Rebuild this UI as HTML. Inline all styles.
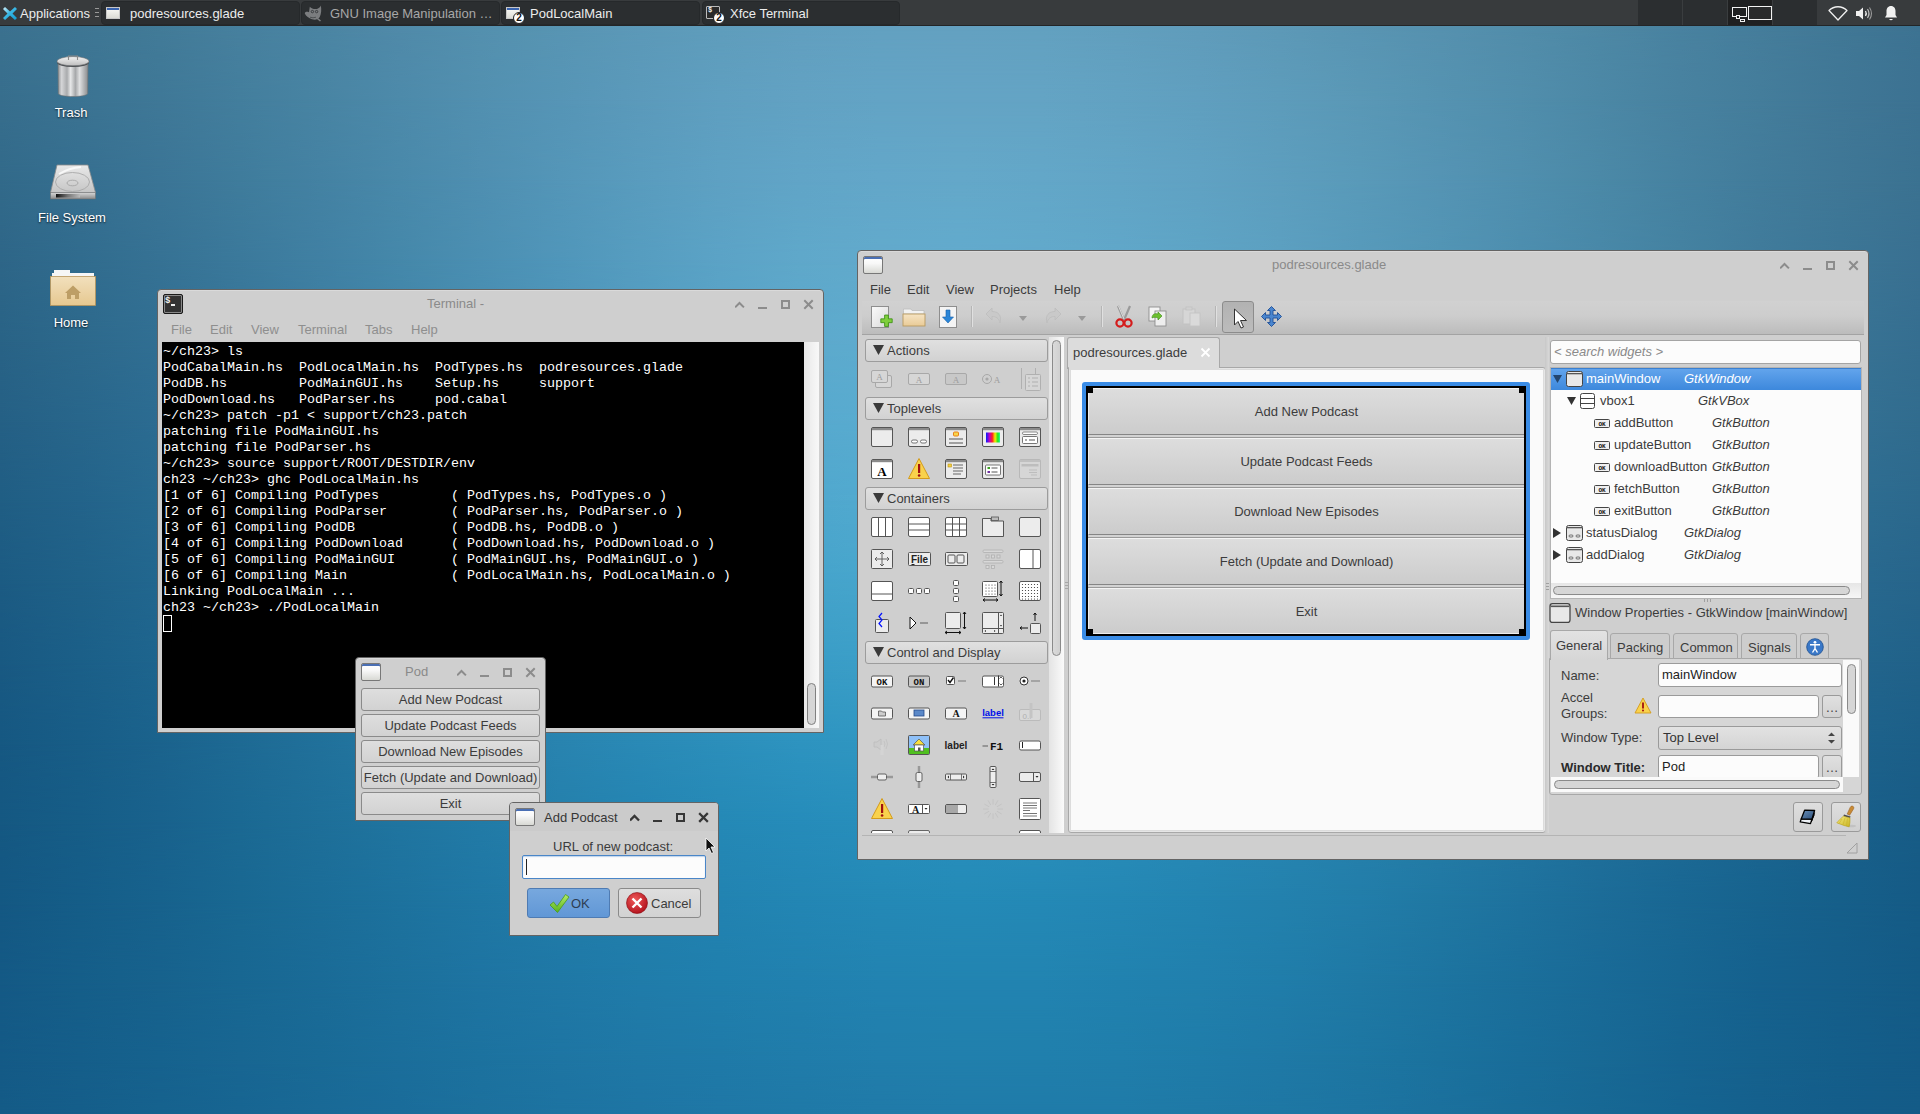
<!DOCTYPE html>
<html><head><meta charset="utf-8">
<style>
*{box-sizing:border-box;margin:0;padding:0}
html,body{width:1920px;height:1114px;overflow:hidden}
body{position:relative;font-family:"Liberation Sans",sans-serif;font-size:13px;color:#3c3c3c;background:#1b5b89}
#wp1{left:0;top:0;width:1920px;height:1114px;background:linear-gradient(90deg,#3b6f91 0px,#447e9f 250px,#5896b8 600px,#63a5c6 900px,#62a4c5 1050px,#508dae 1450px,#3f7596 1800px,#3a6f92 1920px)}
#wp2{left:0;top:0;width:1920px;height:1114px;background:linear-gradient(90deg,#175a8a 0px,#1c6a9c 300px,#2584b6 650px,#2a90c0 930px,#268ab9 1150px,#1b6a9d 1500px,#14528a 1920px);-webkit-mask-image:linear-gradient(180deg,rgba(0,0,0,0) 0px,rgba(0,0,0,.5) 300px,#000 620px,#000 1114px)}
.abs{position:absolute}
#panel{left:0;top:0;width:1920px;height:26px;background:#383b3d;border-bottom:1px solid #232527}
.task{position:absolute;top:1px;height:24px;background:#2b2e30;border:1px solid #26292b;border-radius:4px;color:#e8e8e8;font-size:13px;line-height:24px;white-space:nowrap;overflow:hidden}
.task span{top:0}
.task span{position:absolute;top:0px}
.dicon{position:absolute;color:#fff;font-size:13px;text-align:center;width:100px;text-shadow:0 1px 2px rgba(0,0,0,.8)}
.win{position:absolute;background:#cfcfcf;border:1px solid #646464;border-radius:4px 4px 0 0;box-shadow:inset 0 1px 0 #dadada}
.ttl{position:absolute;font-size:13px;color:#8a8a8a;white-space:nowrap}
.wb{position:absolute}
.term{font-family:"Liberation Mono",monospace;font-size:13.33px;line-height:16px;color:#fff;white-space:pre}
.btn{position:absolute;border:1px solid #8a8a8a;border-radius:3px;background:linear-gradient(#dedede,#d2d2d2);text-align:center;color:#3c3c3c;white-space:nowrap}
.menu span{position:absolute;top:0;white-space:nowrap}
</style></head><body>

<!--WP-->
<div class="abs" style="left:0;top:0;width:1920px;height:1114px;background:linear-gradient(90deg,#3b718f 0px,#3e7693 80px,#427b98 160px,#47809e 240px,#4b85a3 320px,#508aa9 400px,#5490ae 480px,#5895b3 560px,#5c99b8 640px,#5f9dbc 720px,#629fbf 800px,#63a1c1 880px,#64a1c1 960px,#63a1c0 1040px,#629fbe 1120px,#609cbb 1200px,#5d99b7 1280px,#5995b3 1360px,#5691af 1440px,#528daa 1520px,#4d88a5 1600px,#4982a0 1680px,#457d9b 1760px,#417896 1840px,#3d7392 1920px)"></div>
<div class="abs" style="left:0;top:0;width:1920px;height:1114px;background:linear-gradient(90deg,#376e8d 0px,#3b7392 80px,#3f7897 160px,#437e9d 240px,#4884a3 320px,#4d8aaa 400px,#5290b0 480px,#5695b6 560px,#5b9abb 640px,#5f9fc0 720px,#62a2c3 800px,#63a4c5 880px,#64a4c5 960px,#64a4c4 1040px,#62a2c2 1120px,#609fbf 1200px,#5d9cbb 1280px,#5a98b6 1360px,#5593b1 1440px,#518eac 1520px,#4c88a6 1600px,#4882a0 1680px,#447d9b 1760px,#407796 1840px,#3c7292 1920px);-webkit-mask-image:linear-gradient(180deg,rgba(0,0,0,0) 26px,#000 100px)"></div>
<div class="abs" style="left:0;top:0;width:1920px;height:1114px;background:linear-gradient(90deg,#326a8a 0px,#366f90 80px,#3b7596 160px,#3f7c9c 240px,#4482a3 320px,#4989aa 400px,#4f8fb1 480px,#5496b8 560px,#599cbe 640px,#5ea1c3 720px,#61a5c7 800px,#63a7c9 880px,#64a8c9 960px,#63a7c8 1040px,#62a5c6 1120px,#60a2c3 1200px,#5d9ebe 1280px,#599ab9 1360px,#5594b4 1440px,#508fae 1520px,#4b89a7 1600px,#4682a1 1680px,#427c9b 1760px,#3f7796 1840px,#3b7291 1920px);-webkit-mask-image:linear-gradient(180deg,rgba(0,0,0,0) 100px,#000 180px)"></div>
<div class="abs" style="left:0;top:0;width:1920px;height:1114px;background:linear-gradient(90deg,#2e6688 0px,#316c8e 80px,#367294 160px,#3b799b 240px,#4080a3 320px,#4588aa 400px,#4b8fb2 480px,#5096ba 560px,#569dc0 640px,#5ba3c6 720px,#5fa8ca 800px,#62aacc 880px,#62abcd 960px,#62a9cb 1040px,#60a7c9 1120px,#5ea4c5 1200px,#5ca0c1 1280px,#579abb 1360px,#5295b5 1440px,#4d8eaf 1520px,#4888a8 1600px,#4482a1 1680px,#407b9b 1760px,#3c7696 1840px,#397091 1920px);-webkit-mask-image:linear-gradient(180deg,rgba(0,0,0,0) 180px,#000 260px)"></div>
<div class="abs" style="left:0;top:0;width:1920px;height:1114px;background:linear-gradient(90deg,#296386 0px,#2d698c 80px,#316f93 160px,#36769a 240px,#3b7ea2 320px,#4086aa 400px,#468eb3 480px,#4c96bb 560px,#529dc2 640px,#57a4c8 720px,#5ca9cc 800px,#5eaccf 880px,#5faccf 960px,#5eabce 1040px,#5ca8cb 1120px,#5aa4c7 1200px,#579fc2 1280px,#539abc 1360px,#4e93b6 1440px,#498daf 1520px,#4486a8 1600px,#4080a1 1680px,#3c7a9b 1760px,#397495 1840px,#356e90 1920px);-webkit-mask-image:linear-gradient(180deg,rgba(0,0,0,0) 260px,#000 340px)"></div>
<div class="abs" style="left:0;top:0;width:1920px;height:1114px;background:linear-gradient(90deg,#256085 0px,#28668b 80px,#2c6c92 160px,#307499 240px,#357ca1 320px,#3b84aa 400px,#408cb2 480px,#4694ba 560px,#4c9cc2 640px,#52a3c9 720px,#57a9ce 800px,#59acd0 880px,#59acd0 960px,#58aace 1040px,#56a7cb 1120px,#54a2c7 1200px,#509dc1 1280px,#4d97bb 1360px,#4891b5 1440px,#448aae 1520px,#3f84a7 1600px,#3b7da0 1680px,#37779a 1760px,#347194 1840px,#316c8e 1920px);-webkit-mask-image:linear-gradient(180deg,rgba(0,0,0,0) 340px,#000 420px)"></div>
<div class="abs" style="left:0;top:0;width:1920px;height:1114px;background:linear-gradient(90deg,#205e84 0px,#23638a 80px,#276a90 160px,#2b7198 240px,#3079a0 320px,#3581a8 400px,#3a89b1 480px,#3f92b9 560px,#459ac1 640px,#4aa1c8 720px,#4fa7cd 800px,#52aad0 880px,#52aacf 960px,#50a8cd 1040px,#4ea4ca 1120px,#4c9fc5 1200px,#499ac0 1280px,#4594ba 1360px,#418eb3 1440px,#3d87ac 1520px,#3980a5 1600px,#357a9e 1680px,#327398 1760px,#2e6e92 1840px,#2c698d 1920px);-webkit-mask-image:linear-gradient(180deg,rgba(0,0,0,0) 420px,#000 500px)"></div>
<div class="abs" style="left:0;top:0;width:1920px;height:1114px;background:linear-gradient(90deg,#1c5b83 0px,#1f6188 80px,#22678f 160px,#266e96 240px,#2a769e 320px,#2f7ea7 400px,#3386af 480px,#378eb7 560px,#3c96be 640px,#419dc5 720px,#45a3ca 800px,#47a6cd 880px,#48a5cd 960px,#46a3cb 1040px,#45a0c7 1120px,#439bc3 1200px,#4096bd 1280px,#3d90b7 1360px,#3a89b0 1440px,#3683aa 1520px,#327ca3 1600px,#2f769c 1680px,#2c7096 1760px,#296a90 1840px,#27658b 1920px);-webkit-mask-image:linear-gradient(180deg,rgba(0,0,0,0) 500px,#000 580px)"></div>
<div class="abs" style="left:0;top:0;width:1920px;height:1114px;background:linear-gradient(90deg,#195982 0px,#1b5f88 80px,#1e658e 160px,#226c95 240px,#25739d 320px,#297ba4 400px,#2c82ac 480px,#3089b4 560px,#3390ba 640px,#3696c1 720px,#399cc6 800px,#3c9fc8 880px,#3c9fc8 960px,#3c9dc7 1040px,#3b9ac3 1120px,#3996bf 1200px,#3791ba 1280px,#358bb4 1360px,#3285ad 1440px,#2f7ea7 1520px,#2c78a0 1600px,#29729a 1680px,#266c94 1760px,#23668e 1840px,#216289 1920px);-webkit-mask-image:linear-gradient(180deg,rgba(0,0,0,0) 580px,#000 660px)"></div>
<div class="abs" style="left:0;top:0;width:1920px;height:1114px;background:linear-gradient(90deg,#165882 0px,#185d87 80px,#1b638d 160px,#1e6a94 240px,#21719b 320px,#2478a2 400px,#277ea9 480px,#2984b0 560px,#2a8ab6 640px,#2c8fbb 720px,#2e94c0 800px,#3097c2 880px,#3297c3 960px,#3296c1 1040px,#3193bf 1120px,#3090bb 1200px,#2f8bb6 1280px,#2d86b0 1360px,#2b80aa 1440px,#287aa4 1520px,#25749d 1600px,#236e97 1680px,#206891 1760px,#1e638c 1840px,#1c5f88 1920px);-webkit-mask-image:linear-gradient(180deg,rgba(0,0,0,0) 660px,#000 740px)"></div>
<div class="abs" style="left:0;top:0;width:1920px;height:1114px;background:linear-gradient(90deg,#155882 0px,#165d87 80px,#19628d 160px,#1b6993 240px,#1e6f99 320px,#2075a0 400px,#227ba7 480px,#2480ac 560px,#2484b2 640px,#2589b6 720px,#268cba 800px,#288fbc 880px,#2990bd 960px,#2a8fbc 1040px,#298db9 1120px,#298ab6 1200px,#2886b2 1280px,#2781ac 1360px,#257ca7 1440px,#2376a1 1520px,#20709b 1600px,#1d6a95 1680px,#1b6590 1760px,#19608b 1840px,#185c86 1920px);-webkit-mask-image:linear-gradient(180deg,rgba(0,0,0,0) 740px,#000 820px)"></div>
<div class="abs" style="left:0;top:0;width:1920px;height:1114px;background:linear-gradient(90deg,#145883 0px,#155d88 80px,#17628d 160px,#196892 240px,#1b6d98 320px,#1d729e 400px,#1f77a4 480px,#217ca9 560px,#2180ad 640px,#2283b1 720px,#2386b4 800px,#2489b6 880px,#248ab7 960px,#2489b6 1040px,#2487b4 1120px,#2384b1 1200px,#2381ad 1280px,#227da9 1360px,#2078a3 1440px,#1e729e 1520px,#1c6c98 1600px,#196793 1680px,#17638e 1760px,#165f8a 1840px,#155b86 1920px);-webkit-mask-image:linear-gradient(180deg,rgba(0,0,0,0) 820px,#000 900px)"></div>
<div class="abs" style="left:0;top:0;width:1920px;height:1114px;background:linear-gradient(90deg,#145985 0px,#155e89 80px,#17628d 160px,#186792 240px,#1a6b97 320px,#1c709c 400px,#1e74a2 480px,#1f78a6 560px,#207caa 640px,#207fad 720px,#2181af 800px,#2283b1 880px,#2284b1 960px,#2284b1 1040px,#2182af 1120px,#2180ad 1200px,#207daa 1280px,#1f79a5 1360px,#1d74a0 1440px,#1b6f9b 1520px,#196a97 1600px,#176692 1680px,#15618e 1760px,#155e8a 1840px,#145b86 1920px);-webkit-mask-image:linear-gradient(180deg,rgba(0,0,0,0) 900px,#000 980px)"></div>
<div class="abs" style="left:0;top:0;width:1920px;height:1114px;background:linear-gradient(90deg,#145a86 0px,#155e8a 80px,#16628e 160px,#186692 240px,#196a96 320px,#1b6e9b 400px,#1c729f 480px,#1e75a3 560px,#1f78a6 640px,#1f7aa8 720px,#207caa 800px,#217eac 880px,#217fac 960px,#207fac 1040px,#207eab 1120px,#1f7ca9 1200px,#1f79a6 1280px,#1d76a2 1360px,#1b729e 1440px,#196d9a 1520px,#186995 1600px,#166491 1680px,#15618d 1760px,#145e8a 1840px,#145b87 1920px);-webkit-mask-image:linear-gradient(180deg,rgba(0,0,0,0) 980px,#000 1060px)"></div>
<div class="abs" style="left:0;top:0;width:1920px;height:1114px;background:linear-gradient(90deg,#145b87 0px,#155e8a 80px,#16628e 160px,#176592 240px,#196996 320px,#1a6c9a 400px,#1c709d 480px,#1d73a1 560px,#1e75a4 640px,#1f77a6 720px,#1f79a7 800px,#207aa8 880px,#207ba9 960px,#1f7ba9 1040px,#1f7ba8 1120px,#1f79a6 1200px,#1e77a4 1280px,#1d74a1 1360px,#1b709d 1440px,#196c98 1520px,#176894 1600px,#156491 1680px,#15608d 1760px,#145d8a 1840px,#145b87 1920px);-webkit-mask-image:linear-gradient(180deg,rgba(0,0,0,0) 1060px,#000 1114px)"></div>
<!--/WP-->
<!-- DESKTOP ICONS -->
<svg class="abs" style="left:56px;top:54px" width="34" height="45" viewBox="0 0 34 45">
 <defs><linearGradient id="tb" x1="0" x2="1"><stop offset="0" stop-color="#8e9092"/><stop offset=".12" stop-color="#d5d6d8"/><stop offset=".3" stop-color="#a9abad"/><stop offset=".42" stop-color="#e6e7e8"/><stop offset=".58" stop-color="#a6a8aa"/><stop offset=".72" stop-color="#dfe0e1"/><stop offset="1" stop-color="#8a8c8e"/></linearGradient>
 <linearGradient id="tl" x1="0" y1="0" x2="0" y2="1"><stop offset="0" stop-color="#f2f2f2"/><stop offset="1" stop-color="#bdbdbd"/></linearGradient></defs>
 <path d="M2 9 L2.3 39.5 C3 43.5 31 43.5 31.7 39.5 L32 9 Z" fill="url(#tb)" stroke="#6f7274" stroke-width=".6"/>
 <ellipse cx="17" cy="8.5" rx="16" ry="4.5" fill="#4a4d50"/><ellipse cx="17" cy="7.2" rx="16" ry="4.6" fill="url(#tl)" stroke="#6a6d70" stroke-width=".6"/>
 <path d="M12.5 6 L12.5 2 L21.5 2 L21.5 6" fill="none" stroke="#8a8a8a" stroke-width="1.1"/>
</svg>
<div class="dicon" style="left:21px;top:105px">Trash</div>
<svg class="abs" style="left:49px;top:164px" width="48" height="36" viewBox="0 0 48 36">
 <defs><linearGradient id="hd" x1="0" y1="0" x2="0" y2="1"><stop offset="0" stop-color="#e8e8e8"/><stop offset="1" stop-color="#c6c6c6"/></linearGradient>
 <linearGradient id="hf2" x1="0" y1="0" x2="0" y2="1"><stop offset="0" stop-color="#d8d8d8"/><stop offset="1" stop-color="#8a8a8a"/></linearGradient><linearGradient id="hf3" x1="0" x2="1"><stop offset="0" stop-color="#111"/><stop offset=".5" stop-color="#777"/><stop offset="1" stop-color="#bbb"/></linearGradient></defs>
 <path d="M8 1 L39 1 L46.5 28.5 L1.5 28.5 Z" fill="url(#hd)" stroke="#8a8a8a" stroke-width=".8"/>
 <rect x="1.5" y="28.5" width="45" height="6.5" fill="url(#hf2)" stroke="#6a6a6a" stroke-width=".5"/><rect x="7" y="30" width="24" height="3.5" fill="url(#hf3)"/>
 <ellipse cx="23.5" cy="18" rx="17" ry="9.5" fill="none" stroke="#a8a8a8" stroke-width=".9"/><path d="M10 10 Q20 4 32 3" stroke="#f8f8f8" stroke-width="2" fill="none"/>
 <ellipse cx="23.5" cy="19" rx="5.5" ry="2.8" fill="none" stroke="#a0a0a0" stroke-width=".8"/>
</svg>
<div class="dicon" style="left:22px;top:210px">File System</div>
<svg class="abs" style="left:50px;top:269px" width="46" height="38" viewBox="0 0 46 38">
 <defs><linearGradient id="fo" x1="0" y1="0" x2="0" y2="1"><stop offset="0" stop-color="#f2e0bd"/><stop offset="1" stop-color="#e6c890"/></linearGradient></defs>
 <path d="M2 4 L2 8 L44 8 L44 4 L20 4 L20 1 L4 1 L4 4 Z" fill="#f6f6f6"/>
 <rect x="0.5" y="7.5" width="45" height="29" fill="url(#fo)" stroke="#b8965a" stroke-width=".8"/>
 <path d="M15 24 L23 16.5 L31 24 L29 24 L29 30 L25 30 L25 26 L21 26 L21 30 L17 30 L17 24 Z" fill="#bd9e66"/>
</svg>
<div class="dicon" style="left:21px;top:315px">Home</div>
<!-- TERMINAL -->
<div class="win" style="left:157px;top:289px;width:667px;height:444px"></div>
<div class="abs" style="left:163px;top:294px;width:20px;height:20px;background:#333;border:1px solid #1a1a1a;border-radius:2px;box-shadow:inset 0 0 0 1px #888"></div>
<div class="abs term" style="left:165px;top:296px;font-size:9px;line-height:10px;font-weight:bold;color:#eee">$</div><div class="abs" style="left:171px;top:304px;width:4px;height:2px;background:#eee"></div>
<div class="ttl" style="left:427px;top:296px">Terminal -</div>
<svg class="abs" style="left:735px;top:298px" width="80" height="13" viewBox="0 0 80 13">
<path d="M0.8 8.7 L4.5 5 L8.2 8.7" fill="none" stroke="#8c8c8c" stroke-width="2" stroke-linecap="square"/>
<rect x="23" y="9" width="9" height="2" fill="#8c8c8c"/>
<rect x="47" y="3" width="7" height="7" fill="none" stroke="#8c8c8c" stroke-width="2"/>
<path d="M70 3 L77 10 M77 3 L70 10" stroke="#8c8c8c" stroke-width="2" stroke-linecap="square"/>
</svg>
<div class="abs menu" style="left:0;top:322px;color:#8e8e8e">
<span style="left:171px">File</span><span style="left:210px">Edit</span><span style="left:251px">View</span><span style="left:298px">Terminal</span><span style="left:365px">Tabs</span><span style="left:411px">Help</span></div>
<div class="abs" style="left:162px;top:342px;width:642px;height:386px;background:#000"></div>
<div class="abs term" style="left:163px;top:344px">~/ch23&gt; ls
PodCabalMain.hs  PodLocalMain.hs  PodTypes.hs  podresources.glade
PodDB.hs         PodMainGUI.hs    Setup.hs     support
PodDownload.hs   PodParser.hs     pod.cabal
~/ch23&gt; patch -p1 &lt; support/ch23.patch
patching file PodMainGUI.hs
patching file PodParser.hs
~/ch23&gt; source support/ROOT/DESTDIR/env
ch23 ~/ch23&gt; ghc PodLocalMain.hs
[1 of 6] Compiling PodTypes         ( PodTypes.hs, PodTypes.o )
[2 of 6] Compiling PodParser        ( PodParser.hs, PodParser.o )
[3 of 6] Compiling PodDB            ( PodDB.hs, PodDB.o )
[4 of 6] Compiling PodDownload      ( PodDownload.hs, PodDownload.o )
[5 of 6] Compiling PodMainGUI       ( PodMainGUI.hs, PodMainGUI.o )
[6 of 6] Compiling Main             ( PodLocalMain.hs, PodLocalMain.o )
Linking PodLocalMain ...
ch23 ~/ch23&gt; ./PodLocalMain</div>
<div class="abs" style="left:163px;top:615px;width:9px;height:17px;border:1px solid #fff"></div>
<div class="abs" style="left:804px;top:342px;width:15px;height:386px;background:linear-gradient(90deg,#e8e8e8,#f8f8f8)"></div>
<div class="abs" style="left:807px;top:683px;width:9px;height:42px;border:1px solid #808080;border-radius:5px;background:#d6d6d6"></div>

<!-- POD -->
<div class="win" style="left:355px;top:657px;width:191px;height:164px"></div>
<div class="abs" style="left:361px;top:663px;width:20px;height:18px;border:1px solid #777;border-radius:2px;background:linear-gradient(#fff 0,#f8f8f8 40%,#d8d9d4 100%);box-shadow:inset 0 2px 0 #4a6fb4"></div>
<div class="ttl" style="left:405px;top:664px">Pod</div>
<svg class="abs" style="left:457px;top:666px" width="80" height="13" viewBox="0 0 80 13">
<path d="M0.8 8.7 L4.5 5 L8.2 8.7" fill="none" stroke="#8c8c8c" stroke-width="2" stroke-linecap="square"/>
<rect x="23" y="9" width="9" height="2" fill="#8c8c8c"/>
<rect x="47" y="3" width="7" height="7" fill="none" stroke="#8c8c8c" stroke-width="2"/>
<path d="M70 3 L77 10 M77 3 L70 10" stroke="#8c8c8c" stroke-width="2" stroke-linecap="square"/>
</svg>
<div class="btn" style="left:361px;top:688px;width:179px;height:23px;line-height:21px">Add New Podcast</div>
<div class="btn" style="left:361px;top:714px;width:179px;height:23px;line-height:21px">Update Podcast Feeds</div>
<div class="btn" style="left:361px;top:740px;width:179px;height:23px;line-height:21px">Download New Episodes</div>
<div class="btn" style="left:361px;top:766px;width:179px;height:23px;line-height:21px">Fetch (Update and Download)</div>
<div class="btn" style="left:361px;top:792px;width:179px;height:23px;line-height:21px">Exit</div>

<!-- ADD PODCAST -->
<div class="win" style="left:509px;top:802px;width:210px;height:134px"></div>
<div class="abs" style="left:510px;top:803px;width:208px;height:28px;background:#cbcbcb;border-radius:3px 3px 0 0"></div>
<div class="abs" style="left:515px;top:808px;width:20px;height:18px;border:1px solid #777;border-radius:2px;background:linear-gradient(#fff 0,#f8f8f8 40%,#d8d9d4 100%);box-shadow:inset 0 2px 0 #4a6fb4"></div>
<div class="ttl" style="left:544px;top:810px;color:#363636">Add Podcast</div>
<svg class="abs" style="left:630px;top:811px" width="80" height="13" viewBox="0 0 80 13">
<path d="M0.8 8.7 L4.5 5 L8.2 8.7" fill="none" stroke="#363636" stroke-width="2.3" stroke-linecap="square"/>
<rect x="23" y="9" width="9" height="2" fill="#363636"/>
<rect x="47" y="3" width="7" height="7" fill="none" stroke="#363636" stroke-width="2"/>
<path d="M70 3 L77 10 M77 3 L70 10" stroke="#363636" stroke-width="2.3" stroke-linecap="square"/>
</svg>
<div class="abs" style="left:553px;top:839px;color:#3c3c3c;white-space:nowrap">URL of new podcast:</div>
<div class="abs" style="left:522px;top:855px;width:184px;height:24px;border:1px solid #4a86c8;border-radius:2px;background:#fcfcfc;box-shadow:inset 0 1px 1px rgba(74,134,200,.35)"></div>
<div class="abs" style="left:526px;top:859px;width:1px;height:16px;background:#222"></div>
<div class="btn" style="left:527px;top:888px;width:83px;height:30px;background:linear-gradient(#77a8de,#6197d6);border-color:#4e7bb3"></div>
<svg class="abs" style="left:549px;top:893px" width="21" height="21" viewBox="0 0 21 21"><defs><linearGradient id="ckg" x1="0" y1="0" x2="0" y2="1"><stop offset="0" stop-color="#b6ec6a"/><stop offset="1" stop-color="#56b21c"/></linearGradient></defs><path d="M1 12 L4.5 9 L8 13.5 L16.5 1.5 L20 4 L8.5 19.5 Z" fill="url(#ckg)" stroke="#4a9a18" stroke-width=".8" stroke-linejoin="round"/></svg>
<div class="abs" style="left:571px;top:896px;color:#2e3d52;font-size:13px">OK</div>
<div class="btn" style="left:618px;top:888px;width:83px;height:30px"></div>
<svg class="abs" style="left:626px;top:892px" width="22" height="22" viewBox="0 0 22 22"><defs><radialGradient id="rc" cx=".4" cy=".35" r=".7"><stop offset="0" stop-color="#f05a5a"/><stop offset="1" stop-color="#b0101a"/></radialGradient></defs><circle cx="11" cy="11" r="10.5" fill="url(#rc)" stroke="#8a0a10" stroke-width=".6"/><path d="M6.5 6.5 L15.5 15.5 M15.5 6.5 L6.5 15.5" stroke="#fff" stroke-width="2.4"/></svg>
<div class="abs" style="left:651px;top:896px;color:#3c3c3c">Cancel</div>
<svg class="abs" style="left:705px;top:837px" width="12" height="18" viewBox="0 0 12 18"><path d="M1 1 L1 14 L4 11 L6.5 16.5 L8.5 15.5 L6 10 L10 10 Z" fill="#111" stroke="#fff" stroke-width=".8"/></svg>
<!-- GLADE -->
<div class="win" style="left:857px;top:250px;width:1012px;height:610px"></div>
<div class="abs" style="left:863px;top:256px;width:20px;height:18px;border:1px solid #777;border-radius:2px;background:linear-gradient(#fff 0,#f8f8f8 40%,#d8d9d4 100%);box-shadow:inset 0 2px 0 #4a6fb4"></div>
<div class="ttl" style="left:1272px;top:257px">podresources.glade</div>
<svg class="abs" style="left:1780px;top:259px" width="80" height="13" viewBox="0 0 80 13">
<path d="M0.8 8.7 L4.5 5 L8.2 8.7" fill="none" stroke="#8c8c8c" stroke-width="2" stroke-linecap="square"/>
<rect x="23" y="9" width="9" height="2" fill="#8c8c8c"/>
<rect x="47" y="3" width="7" height="7" fill="none" stroke="#8c8c8c" stroke-width="2"/>
<path d="M70 3 L77 10 M77 3 L70 10" stroke="#8c8c8c" stroke-width="2" stroke-linecap="square"/>
</svg>
<div class="abs menu" style="left:0;top:282px;color:#3c3c3c"><span style="left:870px">File</span><span style="left:907px">Edit</span><span style="left:946px">View</span><span style="left:990px">Projects</span><span style="left:1054px">Help</span></div>
<div class="abs" style="left:862px;top:301px;width:1002px;height:34px;background:linear-gradient(#d1d1d1 0,#cdcdcd 45%,#bcbcbc 100%);border-bottom:1px solid #a3a3a3"></div>
<svg class="abs" style="left:870px;top:305px" width="24" height="26" viewBox="0 0 24 26">
<defs><linearGradient id="pg" x1="0" y1="0" x2="1" y2="1"><stop offset="0" stop-color="#fbfbfb"/><stop offset="1" stop-color="#d9d9d9"/></linearGradient></defs>
<rect x="1.5" y="1.5" width="17" height="21" fill="url(#pg)" stroke="#8e8e8e"/>
<path d="M14 13 h4 v-4 h4 v4 h4 v4 h-4 v4 h-4 v-4 h-4 z" transform="translate(-2.5,1.5) scale(0.95)" fill="#7fcf3c" stroke="#3f8f18" stroke-width=".9"/>
</svg>
<svg class="abs" style="left:902px;top:307px" width="25" height="21" viewBox="0 0 25 21">
<defs><linearGradient id="fg" x1="0" y1="0" x2="0" y2="1"><stop offset="0" stop-color="#f6e4c4"/><stop offset="1" stop-color="#e9cb97"/></linearGradient></defs>
<path d="M1.5 3.5 L1.5 2 L9 2 L10 3.5 L22 3.5 L22 7 L1.5 7 Z" fill="#f2f2f2" stroke="#bdbdbd" stroke-width=".8"/>
<rect x="1" y="7" width="22" height="12" fill="url(#fg)" stroke="#b89a60" stroke-width=".9"/>
</svg>
<svg class="abs" style="left:938px;top:305px" width="20" height="24" viewBox="0 0 20 24">
<rect x="1.5" y="1.5" width="17" height="21" fill="#f4f4f4" stroke="#8e8e8e"/>
<path d="M8 5 h4 v7 h3.5 L10 18 L4.5 12 H8 Z" fill="#2b86d8" stroke="#1a5fa8" stroke-width=".6"/>
</svg>
<div class="abs" style="left:971px;top:306px;width:1px;height:21px;background:#b5b5b5;box-shadow:1px 0 0 #e0e0e0"></div>
<div class="abs" style="left:1101px;top:306px;width:1px;height:21px;background:#b5b5b5;box-shadow:1px 0 0 #e0e0e0"></div>
<div class="abs" style="left:1215px;top:306px;width:1px;height:21px;background:#b5b5b5;box-shadow:1px 0 0 #e0e0e0"></div>
<svg class="abs" style="left:984px;top:306px" width="20" height="20" viewBox="0 0 20 20"><path d="M2 8 L8 2 L8 5.5 C14 5.5 18 9 16 17 C15 12 12 10.5 8 10.5 L8 14 Z" fill="#c9c9c9" stroke="#bdbdbd" stroke-width=".8"/></svg>
<svg class="abs" style="left:1018px;top:315px" width="10" height="7" viewBox="0 0 10 7"><path d="M1 1 L9 1 L5 6 Z" fill="#9a9a9a"/></svg>
<svg class="abs" style="left:1043px;top:306px" width="20" height="20" viewBox="0 0 20 20"><path d="M18 8 L12 2 L12 5.5 C6 5.5 2 9 4 17 C5 12 8 10.5 12 10.5 L12 14 Z" fill="#c9c9c9" stroke="#bdbdbd" stroke-width=".8"/></svg>
<svg class="abs" style="left:1077px;top:315px" width="10" height="7" viewBox="0 0 10 7"><path d="M1 1 L9 1 L5 6 Z" fill="#9a9a9a"/></svg>
<svg class="abs" style="left:1115px;top:305px" width="18" height="23" viewBox="0 0 18 23">
<path d="M3 1 L9 15 M15 1 L9 15" stroke="#9a9a9a" stroke-width="2.2"/>
<path d="M3.5 1 L9 14" stroke="#eee" stroke-width=".8"/>
<circle cx="5" cy="18" r="3.6" fill="none" stroke="#d41c1c" stroke-width="2.2"/><circle cx="13" cy="18" r="3.6" fill="none" stroke="#d41c1c" stroke-width="2.2"/>
</svg>
<svg class="abs" style="left:1148px;top:306px" width="20" height="22" viewBox="0 0 20 22">
<rect x="1" y="1" width="11" height="14" fill="#f4f4f4" stroke="#8e8e8e" stroke-width=".9"/>
<rect x="7" y="5" width="11" height="15" fill="#eeeeee" stroke="#8e8e8e" stroke-width=".9"/>
<path d="M4 12 C4 8 7 7 10 8 L10 6 L14 10 L10 14 L10 12 C8 11 6 11 4 12 Z" fill="#6cc030" stroke="#3a8a12" stroke-width=".6"/>
</svg>
<svg class="abs" style="left:1182px;top:306px" width="20" height="22" viewBox="0 0 20 22">
<rect x="1" y="3" width="12" height="15" fill="#d6d6d6" stroke="#c2c2c2" stroke-width=".9"/>
<rect x="4" y="1" width="6" height="3" fill="#d0d0d0" stroke="#c2c2c2" stroke-width=".8"/>
<rect x="8" y="7" width="10" height="13" fill="#dadada" stroke="#c4c4c4" stroke-width=".9"/>
</svg>
<div class="abs" style="left:1222px;top:301px;width:32px;height:32px;border:1px solid #8c8c8c;border-radius:3px;background:linear-gradient(#b2b2b2,#bcbcbc)"></div>
<svg class="abs" style="left:1233px;top:308px" width="16" height="21" viewBox="0 0 16 21"><path d="M1.5 1 L1.5 17 L5 13.5 L8 20 L10.5 19 L7.5 12.5 L13.5 12.5 Z" fill="#fff" stroke="#333" stroke-width="1"/></svg>
<svg class="abs" style="left:1261px;top:306px" width="21" height="21" viewBox="0 0 21 21">
<path d="M10.5 0.5 L14.5 4.5 L12 4.5 L12 9 L16.5 9 L16.5 6.5 L20.5 10.5 L16.5 14.5 L16.5 12 L12 12 L12 16.5 L14.5 16.5 L10.5 20.5 L6.5 16.5 L9 16.5 L9 12 L4.5 12 L4.5 14.5 L0.5 10.5 L4.5 6.5 L4.5 9 L9 9 L9 4.5 L6.5 4.5 Z" fill="#4a86cf" stroke="#1f4f96" stroke-width=".9"/>
</svg>
<div class="abs" style="left:862px;top:337px;width:187px;height:496px;overflow:hidden"><div class="abs" style="left:-862px;top:-337px;width:1920px;height:1114px">
<div class="abs" style="left:865px;top:339px;width:183px;height:23px;border:1px solid #9c9c9c;border-radius:3px;background:linear-gradient(#e0e0e0,#d2d2d2)"></div>
<svg class="abs" style="left:873px;top:345px" width="11" height="10" viewBox="0 0 11 10"><path d="M0 0 L11 0 L5.5 10 Z" fill="#3a3a3a"/></svg>
<div class="abs" style="left:887px;top:339px;line-height:23px;color:#3c3c3c;white-space:nowrap">Actions</div>
<div class="abs" style="left:865px;top:397px;width:183px;height:23px;border:1px solid #9c9c9c;border-radius:3px;background:linear-gradient(#e0e0e0,#d2d2d2)"></div>
<svg class="abs" style="left:873px;top:403px" width="11" height="10" viewBox="0 0 11 10"><path d="M0 0 L11 0 L5.5 10 Z" fill="#3a3a3a"/></svg>
<div class="abs" style="left:887px;top:397px;line-height:23px;color:#3c3c3c;white-space:nowrap">Toplevels</div>
<div class="abs" style="left:865px;top:487px;width:183px;height:23px;border:1px solid #9c9c9c;border-radius:3px;background:linear-gradient(#e0e0e0,#d2d2d2)"></div>
<svg class="abs" style="left:873px;top:493px" width="11" height="10" viewBox="0 0 11 10"><path d="M0 0 L11 0 L5.5 10 Z" fill="#3a3a3a"/></svg>
<div class="abs" style="left:887px;top:487px;line-height:23px;color:#3c3c3c;white-space:nowrap">Containers</div>
<div class="abs" style="left:865px;top:641px;width:183px;height:23px;border:1px solid #9c9c9c;border-radius:3px;background:linear-gradient(#e0e0e0,#d2d2d2)"></div>
<svg class="abs" style="left:873px;top:647px" width="11" height="10" viewBox="0 0 11 10"><path d="M0 0 L11 0 L5.5 10 Z" fill="#3a3a3a"/></svg>
<div class="abs" style="left:887px;top:641px;line-height:23px;color:#3c3c3c;white-space:nowrap">Control and Display</div>
<svg class="abs" style="left:870px;top:367px" width="24" height="24" viewBox="0 0 24 24"><rect x="5.5" y="8.5" width="16" height="12" rx="1.5" fill="#d6d6d6" stroke="#a8a8a8"/><rect x="1.5" y="3.5" width="16" height="12" rx="1.5" fill="#d6d6d6" stroke="#a8a8a8"/><text x="9.5" y="13" font-family="Liberation Serif" font-size="9" fill="#9d9d9d" text-anchor="middle" >A</text></svg>
<svg class="abs" style="left:907px;top:367px" width="24" height="24" viewBox="0 0 24 24"><rect x="1.5" y="6.5" width="21" height="11" rx="1.5" fill="#d6d6d6" stroke="#a8a8a8"/><text x="12" y="15.5" font-family="Liberation Serif" font-size="9" fill="#9d9d9d" text-anchor="middle" >A</text></svg>
<svg class="abs" style="left:944px;top:367px" width="24" height="24" viewBox="0 0 24 24"><rect x="1.5" y="6.5" width="21" height="11" rx="1.5" fill="#c8c8c8" stroke="#a8a8a8"/><text x="12" y="15.5" font-family="Liberation Serif" font-size="9" fill="#9d9d9d" text-anchor="middle" >A</text></svg>
<svg class="abs" style="left:981px;top:367px" width="24" height="24" viewBox="0 0 24 24"><circle cx="6" cy="12" r="4.5" fill="none" stroke="#a8a8a8"/><circle cx="6" cy="12" r="1.6" fill="#a8a8a8"/><text x="16" y="15.5" font-family="Liberation Serif" font-size="9" fill="#9d9d9d" text-anchor="middle" >A</text></svg>
<svg class="abs" style="left:1018px;top:367px" width="24" height="24" viewBox="0 0 24 24"><path d="M3.5 1 V22 M17.5 1 V7" stroke="#b0b0b0"/><rect x="7.5" y="7.5" width="15" height="16" rx="1" fill="#d6d6d6" stroke="#b0b0b0"/><path d="M10 11 h2 M14 11 h6 M10 15 h2 M14 15 h6 M10 19 h2 M14 19 h6" stroke="#b0b0b0"/></svg>
<svg class="abs" style="left:870px;top:425px" width="24" height="24" viewBox="0 0 24 24"><rect x="1.5" y="2.5" width="21" height="19" rx="1.5" fill="#ececec" stroke="#555" stroke-width="1"/><rect x="2" y="3" width="20" height="2.2" fill="#8a8a8a"/></svg>
<svg class="abs" style="left:907px;top:425px" width="24" height="24" viewBox="0 0 24 24"><rect x="1.5" y="2.5" width="21" height="19" rx="1.5" fill="#ececec" stroke="#555" stroke-width="1"/><rect x="2" y="3" width="20" height="2.2" fill="#8a8a8a"/><rect x="4.5" y="15" width="6" height="3" rx="1.5" fill="#fff" stroke="#555" stroke-width=".8"/><rect x="13.5" y="15" width="6" height="3" rx="1.5" fill="#fff" stroke="#555" stroke-width=".8"/></svg>
<svg class="abs" style="left:944px;top:425px" width="24" height="24" viewBox="0 0 24 24"><rect x="1.5" y="2.5" width="21" height="19" rx="1.5" fill="#ececec" stroke="#555" stroke-width="1"/><rect x="2" y="3" width="20" height="2.2" fill="#8a8a8a"/><rect x="9.5" y="7" width="5" height="4" rx="1" fill="#f7d54a" stroke="#e8801a" stroke-width="1"/><path d="M5 14 h14 M5 18 h14" stroke="#555" stroke-width="1"/></svg>
<svg class="abs" style="left:981px;top:425px" width="24" height="24" viewBox="0 0 24 24"><rect x="1.5" y="2.5" width="21" height="19" rx="1.5" fill="#ececec" stroke="#555" stroke-width="1"/><rect x="2" y="3" width="20" height="2.2" fill="#8a8a8a"/><defs><linearGradient id="spec" x1="0" x2="1"><stop offset="0" stop-color="#0020ff"/><stop offset=".25" stop-color="#c000c0"/><stop offset=".45" stop-color="#ff2020"/><stop offset=".65" stop-color="#f0f000"/><stop offset=".85" stop-color="#20e020"/><stop offset="1" stop-color="#20ffa0"/></linearGradient></defs><rect x="5" y="7.5" width="14" height="10" fill="url(#spec)"/></svg>
<svg class="abs" style="left:1018px;top:425px" width="24" height="24" viewBox="0 0 24 24"><rect x="1.5" y="2.5" width="21" height="19" rx="1.5" fill="#ececec" stroke="#555" stroke-width="1"/><rect x="2" y="3" width="20" height="2.2" fill="#8a8a8a"/><rect x="4.5" y="7" width="15" height="2.5" rx="1.2" fill="#fff" stroke="#555" stroke-width=".7"/><rect x="4.5" y="11.5" width="15" height="7" rx="1" fill="#fff" stroke="#555" stroke-width=".8"/><path d="M7 15 h2 M11 15 h6" stroke="#555"/></svg>
<svg class="abs" style="left:870px;top:457px" width="24" height="24" viewBox="0 0 24 24"><rect x="1.5" y="2.5" width="21" height="19" rx="1.5" fill="#fff" stroke="#555" stroke-width="1"/><rect x="2" y="3" width="20" height="2.2" fill="#8a8a8a"/><text x="12" y="18.5" font-family="Liberation Serif" font-weight="bold" font-size="13" fill="#000" text-anchor="middle">A</text></svg>
<svg class="abs" style="left:907px;top:457px" width="24" height="24" viewBox="0 0 24 24"><path d="M12 1.5 L22.5 21.5 L1.5 21.5 Z" fill="#f9d24c" stroke="#d49b1c" stroke-width="1" stroke-linejoin="round"/><rect x="11" y="7" width="2.2" height="9" fill="#a01010"/><circle cx="12.1" cy="18.5" r="1.3" fill="#a01010"/></svg>
<svg class="abs" style="left:944px;top:457px" width="24" height="24" viewBox="0 0 24 24"><rect x="1.5" y="2.5" width="21" height="19" rx="1.5" fill="#ececec" stroke="#555" stroke-width="1"/><rect x="2" y="3" width="20" height="2.2" fill="#8a8a8a"/><rect x="4" y="7" width="3.5" height="3" fill="#f0d040" stroke="#c09010" stroke-width=".6"/><path d="M9 8 h10 M9 11 h10 M9 14 h10 M9 17 h8" stroke="#666" stroke-width="1"/></svg>
<svg class="abs" style="left:981px;top:457px" width="24" height="24" viewBox="0 0 24 24"><rect x="1.5" y="2.5" width="21" height="19" rx="1.5" fill="#ececec" stroke="#555" stroke-width="1"/><rect x="2" y="3" width="20" height="2.2" fill="#8a8a8a"/><rect x="4.5" y="8" width="15" height="10" rx="1" fill="#fff" stroke="#555" stroke-width=".8"/><rect x="6.5" y="10" width="2.5" height="2" fill="#3aa020"/><rect x="6.5" y="14" width="2.5" height="2" fill="#7030a0"/><path d="M10.5 11 h6 M10.5 15 h6" stroke="#555"/></svg>
<svg class="abs" style="left:1018px;top:457px" width="24" height="24" viewBox="0 0 24 24"><rect x="1.5" y="2.5" width="21" height="19" rx="1.5" fill="#d6d6d6" stroke="#b8b8b8"/><rect x="2" y="3" width="20" height="2" fill="#c0c0c0"/><rect x="3.5" y="7" width="17" height="2.5" fill="#bdbdbd"/><path d="M11 13 h8 M11 15.5 h8 M13 18 h6" stroke="#bdbdbd"/></svg>
<svg class="abs" style="left:870px;top:515px" width="24" height="24" viewBox="0 0 24 24"><rect x="1.5" y="2.5" width="21" height="19" rx="1.5" fill="#fff" stroke="#555"/><path d="M8.5 2.5 V21.5 M15.5 2.5 V21.5" stroke="#555"/></svg>
<svg class="abs" style="left:907px;top:515px" width="24" height="24" viewBox="0 0 24 24"><rect x="1.5" y="2.5" width="21" height="19" rx="1.5" fill="#fff" stroke="#555"/><path d="M1.5 9 H22.5 M1.5 15 H22.5" stroke="#555"/></svg>
<svg class="abs" style="left:944px;top:515px" width="24" height="24" viewBox="0 0 24 24"><rect x="1.5" y="2.5" width="21" height="19" rx="1.5" fill="#fff" stroke="#555"/><path d="M8.5 2.5 V21.5 M15.5 2.5 V21.5 M1.5 9 H22.5 M1.5 15 H22.5" stroke="#555"/></svg>
<svg class="abs" style="left:981px;top:515px" width="24" height="24" viewBox="0 0 24 24"><path d="M1.5 3.5 H10 V6 H22.5 V21.5 H1.5 Z" fill="#ececec" stroke="#555" stroke-linejoin="round"/><rect x="10.5" y="2" width="7" height="3.5" fill="#bbb" stroke="#555" stroke-width=".8"/></svg>
<svg class="abs" style="left:1018px;top:515px" width="24" height="24" viewBox="0 0 24 24"><rect x="1.5" y="2.5" width="21" height="19" rx="1.5" fill="#ececec" stroke="#555"/></svg>
<svg class="abs" style="left:870px;top:547px" width="24" height="24" viewBox="0 0 24 24"><rect x="1.5" y="2.5" width="21" height="19" rx="1" fill="#ececec" stroke="#555"/><path d="M12 5 V19 M5 12 H19 M10 7 L12 5 L14 7 M10 17 L12 19 L14 17 M7 10 L5 12 L7 14 M17 10 L19 12 L17 14" stroke="#555" fill="none" stroke-width=".9"/></svg>
<svg class="abs" style="left:907px;top:547px" width="24" height="24" viewBox="0 0 24 24"><rect x="1.5" y="5.5" width="22" height="13" rx="1" fill="#ececec" stroke="#555"/><text x="12.5" y="16" font-family="Liberation Sans" font-weight="bold" font-size="10" fill="#222" text-anchor="middle">File</text><path d="M4.5 17.5 h3" stroke="#222"/></svg>
<svg class="abs" style="left:944px;top:547px" width="24" height="24" viewBox="0 0 24 24"><rect x="1.5" y="5.5" width="22" height="13" rx="1" fill="#ececec" stroke="#555"/><rect x="4" y="8" width="7" height="8" rx="1" fill="#ececec" stroke="#555"/><rect x="13" y="8" width="7" height="8" rx="1" fill="#ececec" stroke="#555"/></svg>
<svg class="abs" style="left:981px;top:547px" width="24" height="24" viewBox="0 0 24 24"><g stroke="#b0b0b0" fill="#d8d8d8" stroke-width=".8"><rect x="2" y="3" width="20" height="2.5" rx="1"/><rect x="5" y="8" width="3" height="3"/><rect x="10.5" y="8" width="3" height="3"/><rect x="16" y="8" width="3" height="3"/><rect x="2" y="13.5" width="20" height="2.5" rx="1"/><rect x="5" y="18.5" width="3" height="3"/><rect x="10.5" y="18.5" width="3" height="3"/></g></svg>
<svg class="abs" style="left:1018px;top:547px" width="24" height="24" viewBox="0 0 24 24"><rect x="1.5" y="2.5" width="21" height="19" rx="1.5" fill="#fff" stroke="#555"/><path d="M15 2.5 V21.5" stroke="#555"/></svg>
<svg class="abs" style="left:870px;top:579px" width="24" height="24" viewBox="0 0 24 24"><rect x="1.5" y="2.5" width="21" height="19" rx="1.5" fill="#fff" stroke="#555"/><path d="M1.5 15 H22.5" stroke="#555"/></svg>
<svg class="abs" style="left:907px;top:579px" width="24" height="24" viewBox="0 0 24 24"><rect x="1.5" y="9.5" width="5" height="5" rx="1" fill="#fff" stroke="#555"/><rect x="9.5" y="9.5" width="5" height="5" rx="1" fill="#fff" stroke="#555"/><rect x="17.5" y="9.5" width="5" height="5" rx="1" fill="#fff" stroke="#555"/></svg>
<svg class="abs" style="left:944px;top:579px" width="24" height="24" viewBox="0 0 24 24"><rect x="9.5" y="1.5" width="5" height="5" rx="1" fill="#fff" stroke="#555"/><rect x="9.5" y="9.5" width="5" height="5" rx="1" fill="#fff" stroke="#555"/><rect x="9.5" y="17.5" width="5" height="5" rx="1" fill="#fff" stroke="#555"/></svg>
<svg class="abs" style="left:981px;top:579px" width="24" height="24" viewBox="0 0 24 24"><rect x="1.5" y="2.5" width="15" height="15" rx="1" fill="#fff" stroke="#555"/><circle cx="5" cy="6" r=".6" fill="#333"/><circle cx="5" cy="9" r=".6" fill="#333"/><circle cx="5" cy="12" r=".6" fill="#333"/><circle cx="5" cy="15" r=".6" fill="#333"/><circle cx="8" cy="6" r=".6" fill="#333"/><circle cx="8" cy="9" r=".6" fill="#333"/><circle cx="8" cy="12" r=".6" fill="#333"/><circle cx="8" cy="15" r=".6" fill="#333"/><circle cx="11" cy="6" r=".6" fill="#333"/><circle cx="11" cy="9" r=".6" fill="#333"/><circle cx="11" cy="12" r=".6" fill="#333"/><circle cx="11" cy="15" r=".6" fill="#333"/><circle cx="14" cy="6" r=".6" fill="#333"/><circle cx="14" cy="9" r=".6" fill="#333"/><circle cx="14" cy="12" r=".6" fill="#333"/><circle cx="14" cy="15" r=".6" fill="#333"/><path d="M20 2 V17 M18.5 4 L20 2 L21.5 4 M18.5 15 L20 17 L21.5 15 M2 21 H17 M4 19.5 L2 21 L4 22.5 M15 19.5 L17 21 L15 22.5" stroke="#111" fill="none" stroke-width="1"/></svg>
<svg class="abs" style="left:1018px;top:579px" width="24" height="24" viewBox="0 0 24 24"><rect x="1.5" y="2.5" width="21" height="19" rx="1.5" fill="#fff" stroke="#555"/><circle cx="4.5" cy="5.5" r=".6" fill="#333"/><circle cx="4.5" cy="8.5" r=".6" fill="#333"/><circle cx="4.5" cy="11.5" r=".6" fill="#333"/><circle cx="4.5" cy="14.5" r=".6" fill="#333"/><circle cx="4.5" cy="17.5" r=".6" fill="#333"/><circle cx="4.5" cy="20" r=".6" fill="#333"/><circle cx="7.5" cy="5.5" r=".6" fill="#333"/><circle cx="7.5" cy="8.5" r=".6" fill="#333"/><circle cx="7.5" cy="11.5" r=".6" fill="#333"/><circle cx="7.5" cy="14.5" r=".6" fill="#333"/><circle cx="7.5" cy="17.5" r=".6" fill="#333"/><circle cx="7.5" cy="20" r=".6" fill="#333"/><circle cx="10.5" cy="5.5" r=".6" fill="#333"/><circle cx="10.5" cy="8.5" r=".6" fill="#333"/><circle cx="10.5" cy="11.5" r=".6" fill="#333"/><circle cx="10.5" cy="14.5" r=".6" fill="#333"/><circle cx="10.5" cy="17.5" r=".6" fill="#333"/><circle cx="10.5" cy="20" r=".6" fill="#333"/><circle cx="13.5" cy="5.5" r=".6" fill="#333"/><circle cx="13.5" cy="8.5" r=".6" fill="#333"/><circle cx="13.5" cy="11.5" r=".6" fill="#333"/><circle cx="13.5" cy="14.5" r=".6" fill="#333"/><circle cx="13.5" cy="17.5" r=".6" fill="#333"/><circle cx="13.5" cy="20" r=".6" fill="#333"/><circle cx="16.5" cy="5.5" r=".6" fill="#333"/><circle cx="16.5" cy="8.5" r=".6" fill="#333"/><circle cx="16.5" cy="11.5" r=".6" fill="#333"/><circle cx="16.5" cy="14.5" r=".6" fill="#333"/><circle cx="16.5" cy="17.5" r=".6" fill="#333"/><circle cx="16.5" cy="20" r=".6" fill="#333"/><circle cx="19.5" cy="5.5" r=".6" fill="#333"/><circle cx="19.5" cy="8.5" r=".6" fill="#333"/><circle cx="19.5" cy="11.5" r=".6" fill="#333"/><circle cx="19.5" cy="14.5" r=".6" fill="#333"/><circle cx="19.5" cy="17.5" r=".6" fill="#333"/><circle cx="19.5" cy="20" r=".6" fill="#333"/></svg>
<svg class="abs" style="left:870px;top:611px" width="24" height="24" viewBox="0 0 24 24"><rect x="5.5" y="8.5" width="13" height="13" rx="1" fill="#ececec" stroke="#555"/><path d="M12 2 L9 5.5 L12 9 L9 12.5 L12 16" stroke="#0010ff" fill="none" stroke-width="1.2"/></svg>
<svg class="abs" style="left:907px;top:611px" width="24" height="24" viewBox="0 0 24 24"><path d="M3 6 L9 12 L3 18 Z" fill="#fff" stroke="#111" stroke-width="1"/><path d="M13 12 H21" stroke="#888" stroke-width="1.6"/></svg>
<svg class="abs" style="left:944px;top:611px" width="24" height="24" viewBox="0 0 24 24"><rect x="1.5" y="1.5" width="15" height="16" rx="1" fill="#ececec" stroke="#555"/><path d="M20.5 1 V18 M19 3 L20.5 1 L22 3 M19 16 L20.5 18 L22 16 M1 21.5 H17 M3 20 L1 21.5 L3 23 M15 20 L17 21.5 L15 23" stroke="#111" fill="none"/></svg>
<svg class="abs" style="left:981px;top:611px" width="24" height="24" viewBox="0 0 24 24"><rect x="1.5" y="1.5" width="21" height="21" rx="1" fill="#ececec" stroke="#555"/><path d="M17.5 1.5 V22.5 M1.5 17.5 H22.5" stroke="#555"/><path d="M19 5 L20 3.5 L21 5 Z M19 14 L20 15.5 L21 14 Z M5 19 L3.5 20 L5 21 Z M13 19 L14.5 20 L13 21 Z" fill="#222"/></svg>
<svg class="abs" style="left:1018px;top:611px" width="24" height="24" viewBox="0 0 24 24"><rect x="12.5" y="12.5" width="10" height="10" rx="1" fill="#ececec" stroke="#555"/><path d="M17 2 V10 M15.5 4 L17 2 L18.5 4 M2 17 H10 M4 15.5 L2 17 L4 18.5" stroke="#111" fill="none"/></svg>
<svg class="abs" style="left:870px;top:669px" width="24" height="24" viewBox="0 0 24 24"><rect x="1.5" y="7.0" width="21" height="11" rx="1.5" fill="#f4f4f4" stroke="#555"/><text x="12" y="15.6" font-family="Liberation Mono" font-weight="bold" font-size="9" fill="#111" text-anchor="middle">OK</text></svg>
<svg class="abs" style="left:907px;top:669px" width="24" height="24" viewBox="0 0 24 24"><rect x="1.5" y="7.0" width="21" height="11" rx="1.5" fill="#c8c8c8" stroke="#555"/><text x="12" y="15.6" font-family="Liberation Mono" font-weight="bold" font-size="9" fill="#111" text-anchor="middle">ON</text></svg>
<svg class="abs" style="left:944px;top:669px" width="24" height="24" viewBox="0 0 24 24"><rect x="2.5" y="7.5" width="8" height="8" rx="1" fill="#fff" stroke="#555"/><path d="M4 11 L6 13.5 L9.5 8.5" stroke="#111" fill="none" stroke-width="1.4"/><path d="M14 12 H22" stroke="#999" stroke-width="1.6"/></svg>
<svg class="abs" style="left:981px;top:669px" width="24" height="24" viewBox="0 0 24 24"><rect x="1.5" y="7.0" width="21" height="11" rx="1.5" fill="#fff" stroke="#555"/><path d="M13.5 8 V16 M17.5 6.5 V17.5" stroke="#333"/><path d="M18.5 9.5 L20 8 L21.5 9.5 M18.5 14.5 L20 16 L21.5 14.5" stroke="#333" fill="none" stroke-width=".8"/></svg>
<svg class="abs" style="left:1018px;top:669px" width="24" height="24" viewBox="0 0 24 24"><circle cx="6" cy="12" r="4" fill="#fff" stroke="#333"/><circle cx="6" cy="12" r="1.6" fill="#222"/><path d="M13 12 H22" stroke="#999" stroke-width="1.6"/></svg>
<svg class="abs" style="left:870px;top:701px" width="24" height="24" viewBox="0 0 24 24"><rect x="1.5" y="7.0" width="21" height="11" rx="1.5" fill="#f4f4f4" stroke="#555"/><path d="M8.5 10 h3 l1 1 h3 v4 h-7 z" fill="#ccc" stroke="#555" stroke-width=".8"/></svg>
<svg class="abs" style="left:907px;top:701px" width="24" height="24" viewBox="0 0 24 24"><rect x="1.5" y="7.0" width="21" height="11" rx="1.5" fill="#f4f4f4" stroke="#555"/><rect x="7" y="9" width="10" height="6" fill="#5a88c8" stroke="#234a8a" stroke-width=".8"/></svg>
<svg class="abs" style="left:944px;top:701px" width="24" height="24" viewBox="0 0 24 24"><rect x="1.5" y="7.0" width="21" height="11" rx="1.5" fill="#f4f4f4" stroke="#555"/><text x="12" y="15.8" font-family="Liberation Serif" font-weight="bold" font-size="10" fill="#111" text-anchor="middle">A</text></svg>
<svg class="abs" style="left:981px;top:701px" width="24" height="24" viewBox="0 0 24 24"><text x="12" y="15" font-family="Liberation Sans" font-weight="bold" font-size="9.5" fill="#0010e8" text-anchor="middle">label</text><path d="M1.5 16.8 H22.5" stroke="#0010e8"/></svg>
<svg class="abs" style="left:1018px;top:701px" width="24" height="24" viewBox="0 0 24 24"><rect x="1.5" y="8.5" width="21" height="11" rx="1.5" fill="#d8d8d8" stroke="#bbb"/><path d="M13 2 V17" stroke="#c4c4c4" stroke-width="3"/><text x="9" y="17.5" font-family="Liberation Sans" font-size="8" fill="#b0b0b0" text-anchor="middle">0..</text></svg>
<svg class="abs" style="left:870px;top:733px" width="24" height="24" viewBox="0 0 24 24"><path d="M4 9 h3 l4 -3 v11 l-4 -3 h-3 z" fill="#ccc" stroke="#bdbdbd" stroke-width=".8"/><path d="M14 8 q2 3 0 6 M16 6 q3 5 0 10" stroke="#c4c4c4" fill="none"/><path d="M12 12 V22" stroke="#d4d4d4" stroke-width="3"/></svg>
<svg class="abs" style="left:907px;top:733px" width="24" height="24" viewBox="0 0 24 24"><rect x="1.5" y="2.5" width="21" height="19" rx="1" fill="#8ec0f8" stroke="#555"/><rect x="2" y="15" width="20" height="6" fill="#50c020"/><path d="M6 12 L12 6 L18 12 Z" fill="#f8e040" stroke="#555" stroke-width=".7"/><rect x="7.5" y="12" width="9" height="6" fill="#fff" stroke="#555" stroke-width=".7"/><rect x="11" y="14.5" width="2.5" height="3.5" fill="#555"/></svg>
<svg class="abs" style="left:944px;top:733px" width="24" height="24" viewBox="0 0 24 24"><text x="12" y="15.5" font-family="Liberation Sans" font-weight="bold" font-size="10" fill="#222" text-anchor="middle">label</text></svg>
<svg class="abs" style="left:981px;top:733px" width="24" height="24" viewBox="0 0 24 24"><path d="M1.5 13 H7" stroke="#888" stroke-width="1.6"/><text x="15.5" y="17" font-family="Liberation Mono" font-weight="bold" font-size="11" fill="#111" text-anchor="middle">F1</text></svg>
<svg class="abs" style="left:1018px;top:733px" width="24" height="24" viewBox="0 0 24 24"><rect x="1.5" y="8.0" width="21" height="9" rx="1.5" fill="#fff" stroke="#555"/><path d="M4.5 9 V15" stroke="#222"/></svg>
<svg class="abs" style="left:870px;top:765px" width="24" height="24" viewBox="0 0 24 24"><path d="M1 12 H23" stroke="#999" stroke-width="2.5"/><rect x="7.5" y="9" width="9" height="6" rx="1.5" fill="#eee" stroke="#555" stroke-width=".9"/></svg>
<svg class="abs" style="left:907px;top:765px" width="24" height="24" viewBox="0 0 24 24"><path d="M12 1 V23" stroke="#999" stroke-width="2.5"/><rect x="9" y="7.5" width="6" height="9" rx="1.5" fill="#eee" stroke="#555" stroke-width=".9"/></svg>
<svg class="abs" style="left:944px;top:765px" width="24" height="24" viewBox="0 0 24 24"><rect x="1.5" y="9" width="21" height="6" rx="1" fill="#eee" stroke="#555"/><path d="M5 10.5 L3.5 12 L5 13.5 Z M19 10.5 L20.5 12 L19 13.5 Z" fill="#222"/><path d="M6.5 9 V15 M17.5 9 V15" stroke="#555" stroke-width=".8"/></svg>
<svg class="abs" style="left:981px;top:765px" width="24" height="24" viewBox="0 0 24 24"><rect x="9" y="1.5" width="6" height="21" rx="1" fill="#eee" stroke="#555"/><path d="M10.5 5 L12 3.5 L13.5 5 Z M10.5 19 L12 20.5 L13.5 19 Z" fill="#222"/><path d="M9 6.5 H15 M9 17.5 H15" stroke="#555" stroke-width=".8"/></svg>
<svg class="abs" style="left:1018px;top:765px" width="24" height="24" viewBox="0 0 24 24"><rect x="1.5" y="7.5" width="21" height="9" rx="1.5" fill="#ececec" stroke="#555"/><path d="M15.5 7.5 V16.5" stroke="#555"/><path d="M17.5 11 L19 12.8 L20.5 11 Z" fill="#222"/></svg>
<svg class="abs" style="left:870px;top:797px" width="24" height="24" viewBox="0 0 24 24"><path d="M12 1.5 L22.5 21.5 L1.5 21.5 Z" fill="#f9d24c" stroke="#d49b1c" stroke-width="1" stroke-linejoin="round"/><rect x="11" y="7" width="2.2" height="9" fill="#a01010"/><circle cx="12.1" cy="18.5" r="1.3" fill="#a01010"/></svg>
<svg class="abs" style="left:907px;top:797px" width="24" height="24" viewBox="0 0 24 24"><rect x="1.5" y="7.5" width="21" height="9" rx="1" fill="#fff" stroke="#555"/><path d="M15.5 7.5 V16.5" stroke="#555"/><text x="8.5" y="15.8" font-family="Liberation Serif" font-weight="bold" font-size="10" fill="#111" text-anchor="middle">A</text><path d="M17.5 11 L19 12.8 L20.5 11 Z" fill="#222"/></svg>
<svg class="abs" style="left:944px;top:797px" width="24" height="24" viewBox="0 0 24 24"><rect x="1.5" y="7.5" width="21" height="9" rx="1.5" fill="#ececec" stroke="#555"/><rect x="2" y="8" width="12" height="8" fill="#a8a8a8"/></svg>
<svg class="abs" style="left:981px;top:797px" width="24" height="24" viewBox="0 0 24 24"><path d="M12 12 L22.0 12.0" stroke="#c4c4c4" stroke-width="1"/><path d="M12 12 L20.7 17.0" stroke="#c4c4c4" stroke-width="1"/><path d="M12 12 L17.0 20.7" stroke="#c4c4c4" stroke-width="1"/><path d="M12 12 L12.0 22.0" stroke="#c4c4c4" stroke-width="1"/><path d="M12 12 L7.0 20.7" stroke="#c4c4c4" stroke-width="1"/><path d="M12 12 L3.3 17.0" stroke="#c4c4c4" stroke-width="1"/><path d="M12 12 L2.0 12.0" stroke="#c4c4c4" stroke-width="1"/><path d="M12 12 L3.3 7.0" stroke="#c4c4c4" stroke-width="1"/><path d="M12 12 L7.0 3.3" stroke="#c4c4c4" stroke-width="1"/><path d="M12 12 L12.0 2.0" stroke="#c4c4c4" stroke-width="1"/><path d="M12 12 L17.0 3.3" stroke="#c4c4c4" stroke-width="1"/><path d="M12 12 L20.7 7.0" stroke="#c4c4c4" stroke-width="1"/><circle cx="12" cy="12" r="4.5" fill="#d0d0d0"/></svg>
<svg class="abs" style="left:1018px;top:797px" width="24" height="24" viewBox="0 0 24 24"><rect x="1.5" y="1.5" width="21" height="21" rx="1" fill="#fff" stroke="#555"/><path d="M5 6 H19 M5 8.5 H19 M5 11 H19 M5 13.5 H12 M5 16.5 H19 M5 19 H19" stroke="#666" stroke-width=".9"/></svg>
<svg class="abs" style="left:870px;top:822px" width="24" height="24" viewBox="0 0 24 24"><rect x="1.5" y="8.5" width="21" height="12" rx="1.5" fill="#fff" stroke="#555"/></svg>
<svg class="abs" style="left:907px;top:822px" width="24" height="24" viewBox="0 0 24 24"><rect x="1.5" y="8.5" width="21" height="12" rx="1.5" fill="#ececec" stroke="#666"/></svg>
<svg class="abs" style="left:1018px;top:822px" width="24" height="24" viewBox="0 0 24 24"><rect x="1.5" y="8.5" width="21" height="12" rx="1.5" fill="#fff" stroke="#555"/></svg>
</div></div>
<div class="abs" style="left:1049px;top:337px;width:15px;height:496px;background:linear-gradient(90deg,#e4e4e4,#fafafa)"></div>
<div class="abs" style="left:1052px;top:340px;width:9px;height:316px;border:1px solid #8a8a8a;border-radius:5px;background:linear-gradient(90deg,#dadada,#d0d0d0)"></div>
<div class="abs" style="left:1065px;top:582px;width:3px;height:8px;background:repeating-linear-gradient(#a8a8a8 0,#a8a8a8 1px,transparent 1px,transparent 3px)"></div>
<div class="abs" style="left:1067px;top:337px;width:153px;height:32px;border:1px solid #a8a8a8;border-bottom:none;border-radius:3px 3px 0 0;background:#dcdcdc"></div>
<div class="abs" style="left:1073px;top:341px;line-height:23px;color:#3c3c3c;white-space:nowrap">podresources.glade</div>
<svg class="abs" style="left:1200px;top:347px" width="11" height="11" viewBox="0 0 11 11"><path d="M1.5 1.5 L9.5 9.5 M9.5 1.5 L1.5 9.5" stroke="#fff" stroke-width="1.8"/></svg>
<div class="abs" style="left:1068px;top:367px;width:478px;height:466px;border:1px solid #a8a8a8;border-radius:0 3px 3px 3px;background:#fafafa;box-shadow:inset 0 0 0 1px #e6e6e6, inset 0 0 0 2px #dcdcdc"></div>
<div class="abs" style="left:1069px;top:367px;width:150px;height:3px;background:#dcdcdc"></div>
<div class="abs" style="left:1082px;top:382px;width:448px;height:258px;border:4px solid #3a8ce6;border-radius:3px;background:#000"></div>
<div class="abs" style="left:1088px;top:388px;width:436px;height:47px;background:linear-gradient(#dddddd,#cccccc);border-top:1px solid #f4f4f4;border-left:1px solid #eeeeee;border-bottom:1px solid #858585;text-align:center;line-height:45px;color:#3c3c3c">Add New Podcast</div>
<div class="abs" style="left:1088px;top:435px;width:436px;height:3px;background:#d2d2d2;border-bottom:1px solid #9a9a9a"></div>
<div class="abs" style="left:1088px;top:438px;width:436px;height:47px;background:linear-gradient(#dddddd,#cccccc);border-top:1px solid #f4f4f4;border-left:1px solid #eeeeee;border-bottom:1px solid #858585;text-align:center;line-height:45px;color:#3c3c3c">Update Podcast Feeds</div>
<div class="abs" style="left:1088px;top:485px;width:436px;height:3px;background:#d2d2d2;border-bottom:1px solid #9a9a9a"></div>
<div class="abs" style="left:1088px;top:488px;width:436px;height:47px;background:linear-gradient(#dddddd,#cccccc);border-top:1px solid #f4f4f4;border-left:1px solid #eeeeee;border-bottom:1px solid #858585;text-align:center;line-height:45px;color:#3c3c3c">Download New Episodes</div>
<div class="abs" style="left:1088px;top:535px;width:436px;height:3px;background:#d2d2d2;border-bottom:1px solid #9a9a9a"></div>
<div class="abs" style="left:1088px;top:538px;width:436px;height:47px;background:linear-gradient(#dddddd,#cccccc);border-top:1px solid #f4f4f4;border-left:1px solid #eeeeee;border-bottom:1px solid #858585;text-align:center;line-height:45px;color:#3c3c3c">Fetch (Update and Download)</div>
<div class="abs" style="left:1088px;top:585px;width:436px;height:3px;background:#d2d2d2;border-bottom:1px solid #9a9a9a"></div>
<div class="abs" style="left:1088px;top:588px;width:436px;height:46px;background:linear-gradient(#dddddd,#cccccc);border-top:1px solid #f4f4f4;border-left:1px solid #eeeeee;border-bottom:1px solid #eeeeee;text-align:center;line-height:45px;color:#3c3c3c">Exit</div>
<div class="abs" style="left:1086px;top:386px;width:7px;height:7px;background:#000"></div>
<div class="abs" style="left:1519px;top:386px;width:7px;height:7px;background:#000"></div>
<div class="abs" style="left:1086px;top:629px;width:7px;height:7px;background:#000"></div>
<div class="abs" style="left:1519px;top:629px;width:7px;height:7px;background:#000"></div>
<div class="abs" style="left:1545px;top:337px;width:4px;height:496px;background:linear-gradient(90deg,#c8c8c8,#d8d8d8)"></div>
<div class="abs" style="left:1546px;top:583px;width:3px;height:7px;background:repeating-linear-gradient(#a0a0a0 0,#a0a0a0 1px,transparent 1px,transparent 3px)"></div>
<div class="abs" style="left:1550px;top:340px;width:311px;height:24px;border:1px solid #a4a4a4;border-radius:3px;background:#fcfcfc"></div>
<div class="abs" style="left:1554px;top:340px;line-height:24px;color:#8a8a8a;font-style:italic;white-space:nowrap">&lt; search widgets &gt;</div>
<div class="abs" style="left:1550px;top:367px;width:312px;height:232px;border:1px solid #b4b4b4;background:#fcfcfc"></div>
<div class="abs" style="left:1551px;top:368px;width:310px;height:22px;background:linear-gradient(#62a4ec,#3d88dc);border-top:1px solid #3a7fd0"></div>
<svg class="abs" style="left:1553px;top:375px" width="9" height="8" viewBox="0 0 9 8"><path d="M0 0 L9 0 L4.5 8 Z" fill="#24466e"/></svg>
<svg class="abs" style="left:1566px;top:371px" width="17" height="16" viewBox="0 0 17 16"><rect x="0.5" y="0.5" width="16" height="15" rx="2" fill="#e8e8e8" stroke="#444"/><rect x="1" y="2" width="15" height="1.3" fill="#555"/></svg>
<div class="abs" style="left:1586px;top:368px;line-height:22px;color:#fff;white-space:nowrap">mainWindow</div>
<div class="abs" style="left:1684px;top:368px;line-height:22px;color:#fff;font-style:italic;white-space:nowrap">GtkWindow</div>
<svg class="abs" style="left:1567px;top:397px" width="9" height="8" viewBox="0 0 9 8"><path d="M0 0 L9 0 L4.5 8 Z" fill="#333"/></svg>
<svg class="abs" style="left:1580px;top:393px" width="15" height="16" viewBox="0 0 15 16"><rect x="0.5" y="0.5" width="14" height="15" rx="2" fill="#fff" stroke="#444"/><path d="M0.5 5.5 H14.5 M0.5 10.5 H14.5" stroke="#444"/></svg>
<div class="abs" style="left:1600px;top:390px;line-height:22px;color:#3c3c3c;white-space:nowrap">vbox1</div>
<div class="abs" style="left:1698px;top:390px;line-height:22px;color:#3c3c3c;font-style:italic;white-space:nowrap">GtkVBox</div>
<svg class="abs" style="left:1594px;top:419px" width="16" height="9" viewBox="0 0 16 9"><rect x="0.5" y="0.5" width="15" height="8" rx="1" fill="#f0f0f0" stroke="#444"/><text x="8" y="7" font-family="Liberation Mono" font-weight="bold" font-size="6" fill="#111" text-anchor="middle">OK</text></svg>
<div class="abs" style="left:1614px;top:412px;line-height:22px;color:#3c3c3c;white-space:nowrap">addButton</div>
<div class="abs" style="left:1712px;top:412px;line-height:22px;color:#3c3c3c;font-style:italic;white-space:nowrap">GtkButton</div>
<svg class="abs" style="left:1594px;top:441px" width="16" height="9" viewBox="0 0 16 9"><rect x="0.5" y="0.5" width="15" height="8" rx="1" fill="#f0f0f0" stroke="#444"/><text x="8" y="7" font-family="Liberation Mono" font-weight="bold" font-size="6" fill="#111" text-anchor="middle">OK</text></svg>
<div class="abs" style="left:1614px;top:434px;line-height:22px;color:#3c3c3c;white-space:nowrap">updateButton</div>
<div class="abs" style="left:1712px;top:434px;line-height:22px;color:#3c3c3c;font-style:italic;white-space:nowrap">GtkButton</div>
<svg class="abs" style="left:1594px;top:463px" width="16" height="9" viewBox="0 0 16 9"><rect x="0.5" y="0.5" width="15" height="8" rx="1" fill="#f0f0f0" stroke="#444"/><text x="8" y="7" font-family="Liberation Mono" font-weight="bold" font-size="6" fill="#111" text-anchor="middle">OK</text></svg>
<div class="abs" style="left:1614px;top:456px;line-height:22px;color:#3c3c3c;white-space:nowrap">downloadButton</div>
<div class="abs" style="left:1712px;top:456px;line-height:22px;color:#3c3c3c;font-style:italic;white-space:nowrap">GtkButton</div>
<svg class="abs" style="left:1594px;top:485px" width="16" height="9" viewBox="0 0 16 9"><rect x="0.5" y="0.5" width="15" height="8" rx="1" fill="#f0f0f0" stroke="#444"/><text x="8" y="7" font-family="Liberation Mono" font-weight="bold" font-size="6" fill="#111" text-anchor="middle">OK</text></svg>
<div class="abs" style="left:1614px;top:478px;line-height:22px;color:#3c3c3c;white-space:nowrap">fetchButton</div>
<div class="abs" style="left:1712px;top:478px;line-height:22px;color:#3c3c3c;font-style:italic;white-space:nowrap">GtkButton</div>
<svg class="abs" style="left:1594px;top:507px" width="16" height="9" viewBox="0 0 16 9"><rect x="0.5" y="0.5" width="15" height="8" rx="1" fill="#f0f0f0" stroke="#444"/><text x="8" y="7" font-family="Liberation Mono" font-weight="bold" font-size="6" fill="#111" text-anchor="middle">OK</text></svg>
<div class="abs" style="left:1614px;top:500px;line-height:22px;color:#3c3c3c;white-space:nowrap">exitButton</div>
<div class="abs" style="left:1712px;top:500px;line-height:22px;color:#3c3c3c;font-style:italic;white-space:nowrap">GtkButton</div>
<svg class="abs" style="left:1553px;top:528px" width="8" height="10" viewBox="0 0 8 10"><path d="M0 0 L8 5 L0 10 Z" fill="#333"/></svg>
<svg class="abs" style="left:1566px;top:525px" width="17" height="16" viewBox="0 0 17 16"><rect x="0.5" y="0.5" width="16" height="15" rx="2" fill="#e8e8e8" stroke="#444"/><rect x="1" y="2" width="15" height="1.3" fill="#555"/><rect x="3" y="10" width="4" height="2" rx="1" fill="none" stroke="#444" stroke-width=".7"/><rect x="10" y="10" width="4" height="2" rx="1" fill="none" stroke="#444" stroke-width=".7"/></svg>
<div class="abs" style="left:1586px;top:522px;line-height:22px;color:#3c3c3c;white-space:nowrap">statusDialog</div>
<div class="abs" style="left:1684px;top:522px;line-height:22px;color:#3c3c3c;font-style:italic;white-space:nowrap">GtkDialog</div>
<svg class="abs" style="left:1553px;top:550px" width="8" height="10" viewBox="0 0 8 10"><path d="M0 0 L8 5 L0 10 Z" fill="#333"/></svg>
<svg class="abs" style="left:1566px;top:547px" width="17" height="16" viewBox="0 0 17 16"><rect x="0.5" y="0.5" width="16" height="15" rx="2" fill="#e8e8e8" stroke="#444"/><rect x="1" y="2" width="15" height="1.3" fill="#555"/><rect x="3" y="10" width="4" height="2" rx="1" fill="none" stroke="#444" stroke-width=".7"/><rect x="10" y="10" width="4" height="2" rx="1" fill="none" stroke="#444" stroke-width=".7"/></svg>
<div class="abs" style="left:1586px;top:544px;line-height:22px;color:#3c3c3c;white-space:nowrap">addDialog</div>
<div class="abs" style="left:1684px;top:544px;line-height:22px;color:#3c3c3c;font-style:italic;white-space:nowrap">GtkDialog</div>
<div class="abs" style="left:1551px;top:583px;width:310px;height:15px;background:linear-gradient(#e6e6e6,#f6f6f6)"></div>
<div class="abs" style="left:1553px;top:586px;width:297px;height:9px;border:1px solid #8a8a8a;border-radius:5px;background:#d6d6d6"></div>
<div class="abs" style="left:1704px;top:599px;width:7px;height:3px;background:repeating-linear-gradient(90deg,#a0a0a0 0,#a0a0a0 1px,transparent 1px,transparent 3px)"></div>
<svg class="abs" style="left:1549px;top:603px" width="22" height="20" viewBox="0 0 17 16"><rect x="0.5" y="0.5" width="16" height="15" rx="2" fill="#e8e8e8" stroke="#444"/><rect x="1" y="2" width="15" height="1.3" fill="#555"/></svg>
<div class="abs" style="left:1575px;top:603px;line-height:20px;color:#3c3c3c;white-space:nowrap">Window Properties - GtkWindow [mainWindow]</div>
<div class="abs" style="left:1549px;top:658px;width:313px;height:137px;border:1px solid #a8a8a8;border-radius:0 3px 3px 3px;background:#d6d6d6"></div>
<div class="abs" style="left:1550px;top:630px;width:58px;height:30px;border:1px solid #a8a8a8;border-bottom:none;border-radius:3px 3px 0 0;background:linear-gradient(#e2e2e2,#d6d6d6)"></div>
<div class="abs" style="left:1556px;top:634px;line-height:23px;color:#3c3c3c">General</div>
<div class="abs" style="left:1610px;top:633px;width:60px;height:26px;border:1px solid #a8a8a8;border-radius:3px 3px 0 0;background:#cdcdcd"></div>
<div class="abs" style="left:1617px;top:636px;line-height:23px;color:#3c3c3c">Packing</div>
<div class="abs" style="left:1673px;top:633px;width:65px;height:26px;border:1px solid #a8a8a8;border-radius:3px 3px 0 0;background:#cdcdcd"></div>
<div class="abs" style="left:1680px;top:636px;line-height:23px;color:#3c3c3c">Common</div>
<div class="abs" style="left:1741px;top:633px;width:56px;height:26px;border:1px solid #a8a8a8;border-radius:3px 3px 0 0;background:#cdcdcd"></div>
<div class="abs" style="left:1748px;top:636px;line-height:23px;color:#3c3c3c">Signals</div>
<div class="abs" style="left:1800px;top:633px;width:29px;height:26px;border:1px solid #a8a8a8;border-radius:3px 3px 0 0;background:#cdcdcd"></div>
<svg class="abs" style="left:1806px;top:638px" width="18" height="18" viewBox="0 0 18 18"><circle cx="9" cy="9" r="8.3" fill="#3a78c8" stroke="#1d4f90" stroke-width=".8"/><circle cx="9" cy="4.3" r="1.4" fill="#fff"/><path d="M4 6.8 L14 6.8 M9 6.8 L9 10.5 L6.5 14.5 M9 10.5 L11.5 14.5" stroke="#fff" stroke-width="1.4" fill="none"/></svg>
<div class="abs" style="left:1843px;top:660px;width:16px;height:117px;background:#fafafa"></div>
<div class="abs" style="left:1847px;top:664px;width:9px;height:50px;border:1px solid #8a8a8a;border-radius:5px;background:#d6d6d6"></div>
<div class="abs" style="left:1551px;top:777px;width:292px;height:15px;background:#fafafa"></div>
<div class="abs" style="left:1554px;top:780px;width:286px;height:9px;border:1px solid #8a8a8a;border-radius:5px;background:#d6d6d6"></div>
<div class="abs" style="left:1551px;top:660px;width:292px;height:117px;overflow:hidden"><div class="abs" style="left:-1551px;top:-660px;width:1920px;height:1114px">
<div class="abs" style="left:1561px;top:665px;line-height:22px;color:#3c3c3c">Name:</div>
<div class="abs" style="left:1658px;top:663px;width:184px;height:24px;border:1px solid #9a9a9a;border-radius:3px;background:#fcfcfc"></div>
<div class="abs" style="left:1662px;top:664px;line-height:22px;color:#222">mainWindow</div>
<div class="abs" style="left:1561px;top:690px;line-height:16px;color:#3c3c3c">Accel<br>Groups:</div>
<svg class="abs" style="left:1634px;top:697px" width="18" height="17" viewBox="0 0 18 17"><path d="M9 1 L17 16 L1 16 Z" fill="#f9d24c" stroke="#d49b1c" stroke-width=".9" stroke-linejoin="round"/><rect x="8.1" y="5.5" width="1.8" height="6" fill="#a01010"/><circle cx="9" cy="13.5" r="1" fill="#a01010"/></svg>
<div class="abs" style="left:1658px;top:695px;width:161px;height:23px;border:1px solid #9a9a9a;border-radius:3px;background:#fcfcfc"></div>
<div class="abs" style="left:1822px;top:695px;width:20px;height:23px;border:1px solid #9a9a9a;border-radius:3px;background:linear-gradient(#e0e0e0,#d2d2d2);text-align:center;line-height:24px;color:#444">&hellip;</div>
<div class="abs" style="left:1561px;top:727px;line-height:22px;color:#3c3c3c">Window Type:</div>
<div class="abs" style="left:1658px;top:726px;width:184px;height:24px;border:1px solid #9a9a9a;border-radius:3px;background:linear-gradient(#e2e2e2,#d4d4d4)"></div>
<div class="abs" style="left:1663px;top:727px;line-height:22px;color:#333">Top Level</div>
<svg class="abs" style="left:1827px;top:731px" width="9" height="14" viewBox="0 0 9 14"><path d="M1 5 L4.5 1.5 L8 5 Z M1 9 L4.5 12.5 L8 9 Z" fill="#444"/></svg>
<div class="abs" style="left:1561px;top:757px;line-height:22px;color:#2a2a2a;font-weight:bold">Window Title:</div>
<div class="abs" style="left:1658px;top:755px;width:161px;height:24px;border:1px solid #9a9a9a;border-radius:3px;background:#fcfcfc"></div>
<div class="abs" style="left:1662px;top:756px;line-height:22px;color:#222">Pod</div>
<div class="abs" style="left:1822px;top:755px;width:20px;height:24px;border:1px solid #9a9a9a;border-radius:3px;background:linear-gradient(#e0e0e0,#d2d2d2);text-align:center;line-height:24px;color:#444">&hellip;</div>
</div></div>
<div class="abs" style="left:1793px;top:802px;width:30px;height:30px;border:1px solid #9a9a9a;border-radius:3px;background:linear-gradient(#dedede,#d0d0d0)"></div>
<svg class="abs" style="left:1799px;top:809px" width="18" height="17" viewBox="0 0 18 17"><defs><linearGradient id="bkg" x1="0" y1="0" x2="1" y2="1"><stop offset="0" stop-color="#6a90b8"/><stop offset="1" stop-color="#2c4e78"/></linearGradient></defs><path d="M2.3 9.8 L1.2 12.9 L11.5 14.6 L12.9 10.1 Z" fill="#eef2f6" stroke="#000" stroke-width="1.3" stroke-linejoin="round"/><path d="M5.6 1.2 L15.6 1.5 L12.9 10.1 L2.3 9.8 Z" fill="url(#bkg)" stroke="#000" stroke-width="1.3" stroke-linejoin="round"/><path d="M15.6 3.5 L12.3 13 M15.4 5.5 L12.6 12" stroke="#000" stroke-width="1"/></svg>
<div class="abs" style="left:1831px;top:802px;width:30px;height:30px;border:1px solid #9a9a9a;border-radius:3px;background:linear-gradient(#dedede,#d0d0d0)"></div>
<svg class="abs" style="left:1836px;top:805px" width="22" height="23" viewBox="0 0 22 23"><defs><linearGradient id="brg" x1="0" y1="0" x2="1" y2="1"><stop offset="0" stop-color="#f6ea80"/><stop offset="1" stop-color="#c8b420"/></linearGradient></defs><ellipse cx="15" cy="21" rx="5" ry="1.3" fill="#000" opacity=".08"/><path d="M15.2 1.2 C17 0.8 18.4 2 17.6 3.8 L13.6 10.2 L11.2 9 L14.2 2.4 Z" fill="#c88a34" stroke="#9a6220" stroke-width=".6"/><path d="M8 9.6 L14.6 11.4 L14 13 L7.4 11.2 Z" fill="#4a4a52"/><path d="M7.4 11.2 L14 13 C14.2 16 13.8 19 13.2 21.8 L8 20.5 L0.8 17.8 C3 15.2 5.2 13 7.4 11.2 Z" fill="url(#brg)" stroke="#b8a010" stroke-width=".6"/><path d="M6 14 L3 18.5 M9 13 L7 19.8 M11.5 13.5 L10.5 20.8" stroke="#c8b028" stroke-width=".6"/></svg>
<div class="abs" style="left:862px;top:835px;width:984px;height:1px;background:#b4b4b4"></div>
<svg class="abs" style="left:1846px;top:842px" width="12" height="12" viewBox="0 0 12 12"><path d="M11 1 L11 11 L1 11 Z" fill="none" stroke="#a0a0a0" stroke-width="1"/></svg>
<!-- PANEL -->
<div id="panel" class="abs">
 <svg class="abs" style="left:2px;top:5px" width="16" height="16" viewBox="0 0 16 16"><defs><linearGradient id="xg" x1="0" y1="0" x2="1" y2="1"><stop offset="0" stop-color="#d8f2fb"/><stop offset=".45" stop-color="#3ab8e6"/><stop offset="1" stop-color="#109ad0"/></linearGradient></defs><path d="M3 2 L8 6.5 L13 2 L15 4 L10.5 8.5 L15 13 L13 15 L8 10.5 L3 15 L1 13 L5.5 8.5 L1 4 Z" fill="url(#xg)"/></svg>
 <div class="abs" style="left:20px;top:5px;color:#ececec;font-size:13px;line-height:18px">Applications</div>
 <div class="abs" style="left:95px;top:8px;width:4px;height:1px;background:#999;box-shadow:0 4px 0 #999,0 8px 0 #999"></div>
  <div class="task" style="left:101px;width:199px"><span style="left:28px;color:#ececec">podresources.glade</span></div>
 <div class="task" style="left:301px;width:199px"><span style="left:28px;color:#a8a8a8">GNU Image Manipulation &hellip;</span></div>
 <div class="task" style="left:501px;width:199px"><span style="left:28px;color:#ececec">PodLocalMain</span></div>
 <div class="task" style="left:702px;width:198px"><span style="left:27px;color:#ececec">Xfce Terminal</span></div>
 <!-- task icons -->
 <div class="abs" style="left:106px;top:7px;width:14px;height:12px;background:linear-gradient(#3a64b0 0,#3a64b0 2px,#f4f4f0 2px,#dcdcd6 100%);border:1px solid #c8c8c8"></div>
 <svg class="abs" style="left:304px;top:5px" width="18" height="17" viewBox="0 0 18 17"><path d="M0.8 8.5 C0.8 6.6 3 6.4 5 7.2 L5.8 1.8 C7.5 3.8 10.5 4.4 13 3.9 C15 3.4 16.4 2 16.8 0.5 C17.6 4 17.4 9 15.6 12.2 C14 14.6 11 15.2 8 14.2 C5 13.2 2 11.2 0.8 8.5 Z" fill="#7b7d7f"/><circle cx="8.4" cy="6.6" r="1.2" fill="none" stroke="#2e3133" stroke-width=".8"/><circle cx="12.6" cy="6.6" r="1.2" fill="none" stroke="#2e3133" stroke-width=".8"/><path d="M12.2 12.5 L16.5 16" stroke="#7b7d7f" stroke-width="1.6"/><path d="M6 12.2 Q9 13.4 12 12.2" stroke="#3a3d3f" stroke-width=".7" fill="none"/></svg>
 <div class="abs" style="left:506px;top:7px;width:14px;height:12px;background:linear-gradient(#3a64b0 0,#3a64b0 2px,#f4f4f0 2px,#dcdcd6 100%);border:1px solid #c8c8c8"></div>
 <div class="abs" style="left:513px;top:12px;width:12px;height:12px;border-radius:50%;background:#fff;border:1px solid #222;color:#111;font-size:10px;font-weight:bold;line-height:10px;text-align:center">2</div>
 <div class="abs" style="left:706px;top:6px;width:14px;height:13px;background:#2a2a2a;border:1px solid #bbb;border-radius:1px"></div>
 <div class="abs" style="left:708px;top:6px;color:#eee;font-size:7px;font-family:'Liberation Mono',monospace;font-weight:bold">$</div>
 <div class="abs" style="left:713px;top:12px;width:12px;height:12px;border-radius:50%;background:#fff;border:1px solid #222;color:#111;font-size:10px;font-weight:bold;line-height:10px;text-align:center">2</div>
 <!-- right side -->
 <div class="abs" style="left:1638px;top:0;width:179px;height:25px;background:#2b2e30"></div>
 <div class="abs" style="left:1682px;top:0;width:1px;height:25px;background:#3a3d3f"></div>
 <div class="abs" style="left:1727px;top:0;width:1px;height:25px;background:#3a3d3f"></div>
 <div class="abs" style="left:1728px;top:0;width:44px;height:25px;background:#1f2021"></div>
 <div class="abs" style="left:1772px;top:0;width:1px;height:25px;background:#3a3d3f"></div>
 <div class="abs" style="left:1732px;top:7px;width:15px;height:10px;border:1px solid #f2f2f2"></div>
 <div class="abs" style="left:1736px;top:15px;width:4px;height:4px;border:1px solid #f2f2f2;background:#1f2021"></div>
 <div class="abs" style="left:1740px;top:19px;width:5px;height:3px;border:1px solid #f2f2f2"></div>
 <div class="abs" style="left:1748px;top:6px;width:24px;height:14px;border:1px solid #f2f2f2;background:#2a2b2c"></div>
 <svg class="abs" style="left:1828px;top:6px" width="20" height="15" viewBox="0 0 20 15"><path d="M1 4.5 C6 -0.5 14 -0.5 19 4.5 L10 14 Z" fill="none" stroke="#f0f0f0" stroke-width="1.3" stroke-linejoin="round"/></svg>
 <svg class="abs" style="left:1855px;top:6px" width="18" height="15" viewBox="0 0 18 15"><path d="M1 5 L4 5 L8 1.5 L8 13.5 L4 10 L1 10 Z" fill="#f0f0f0"/><path d="M10.5 5 Q12 7.5 10.5 10" stroke="#f0f0f0" stroke-width="1.3" fill="none"/><path d="M12.5 3 Q15.5 7.5 12.5 12" stroke="#bdbdbd" stroke-width="1.2" fill="none"/><path d="M14.5 1.5 Q18.5 7.5 14.5 13.5" stroke="#9a9a9a" stroke-width="1.1" fill="none"/></svg>
 <svg class="abs" style="left:1884px;top:5px" width="14" height="17" viewBox="0 0 14 17"><path d="M7 1 C4 1 2.5 3.5 2.5 6 L2.5 10 L1 12.5 L13 12.5 L11.5 10 L11.5 6 C11.5 3.5 10 1 7 1 Z" fill="#f0f0f0"/><path d="M5 14 Q7 16.5 9 14 Z" fill="#f0f0f0"/></svg>
</div>

</body></html>
